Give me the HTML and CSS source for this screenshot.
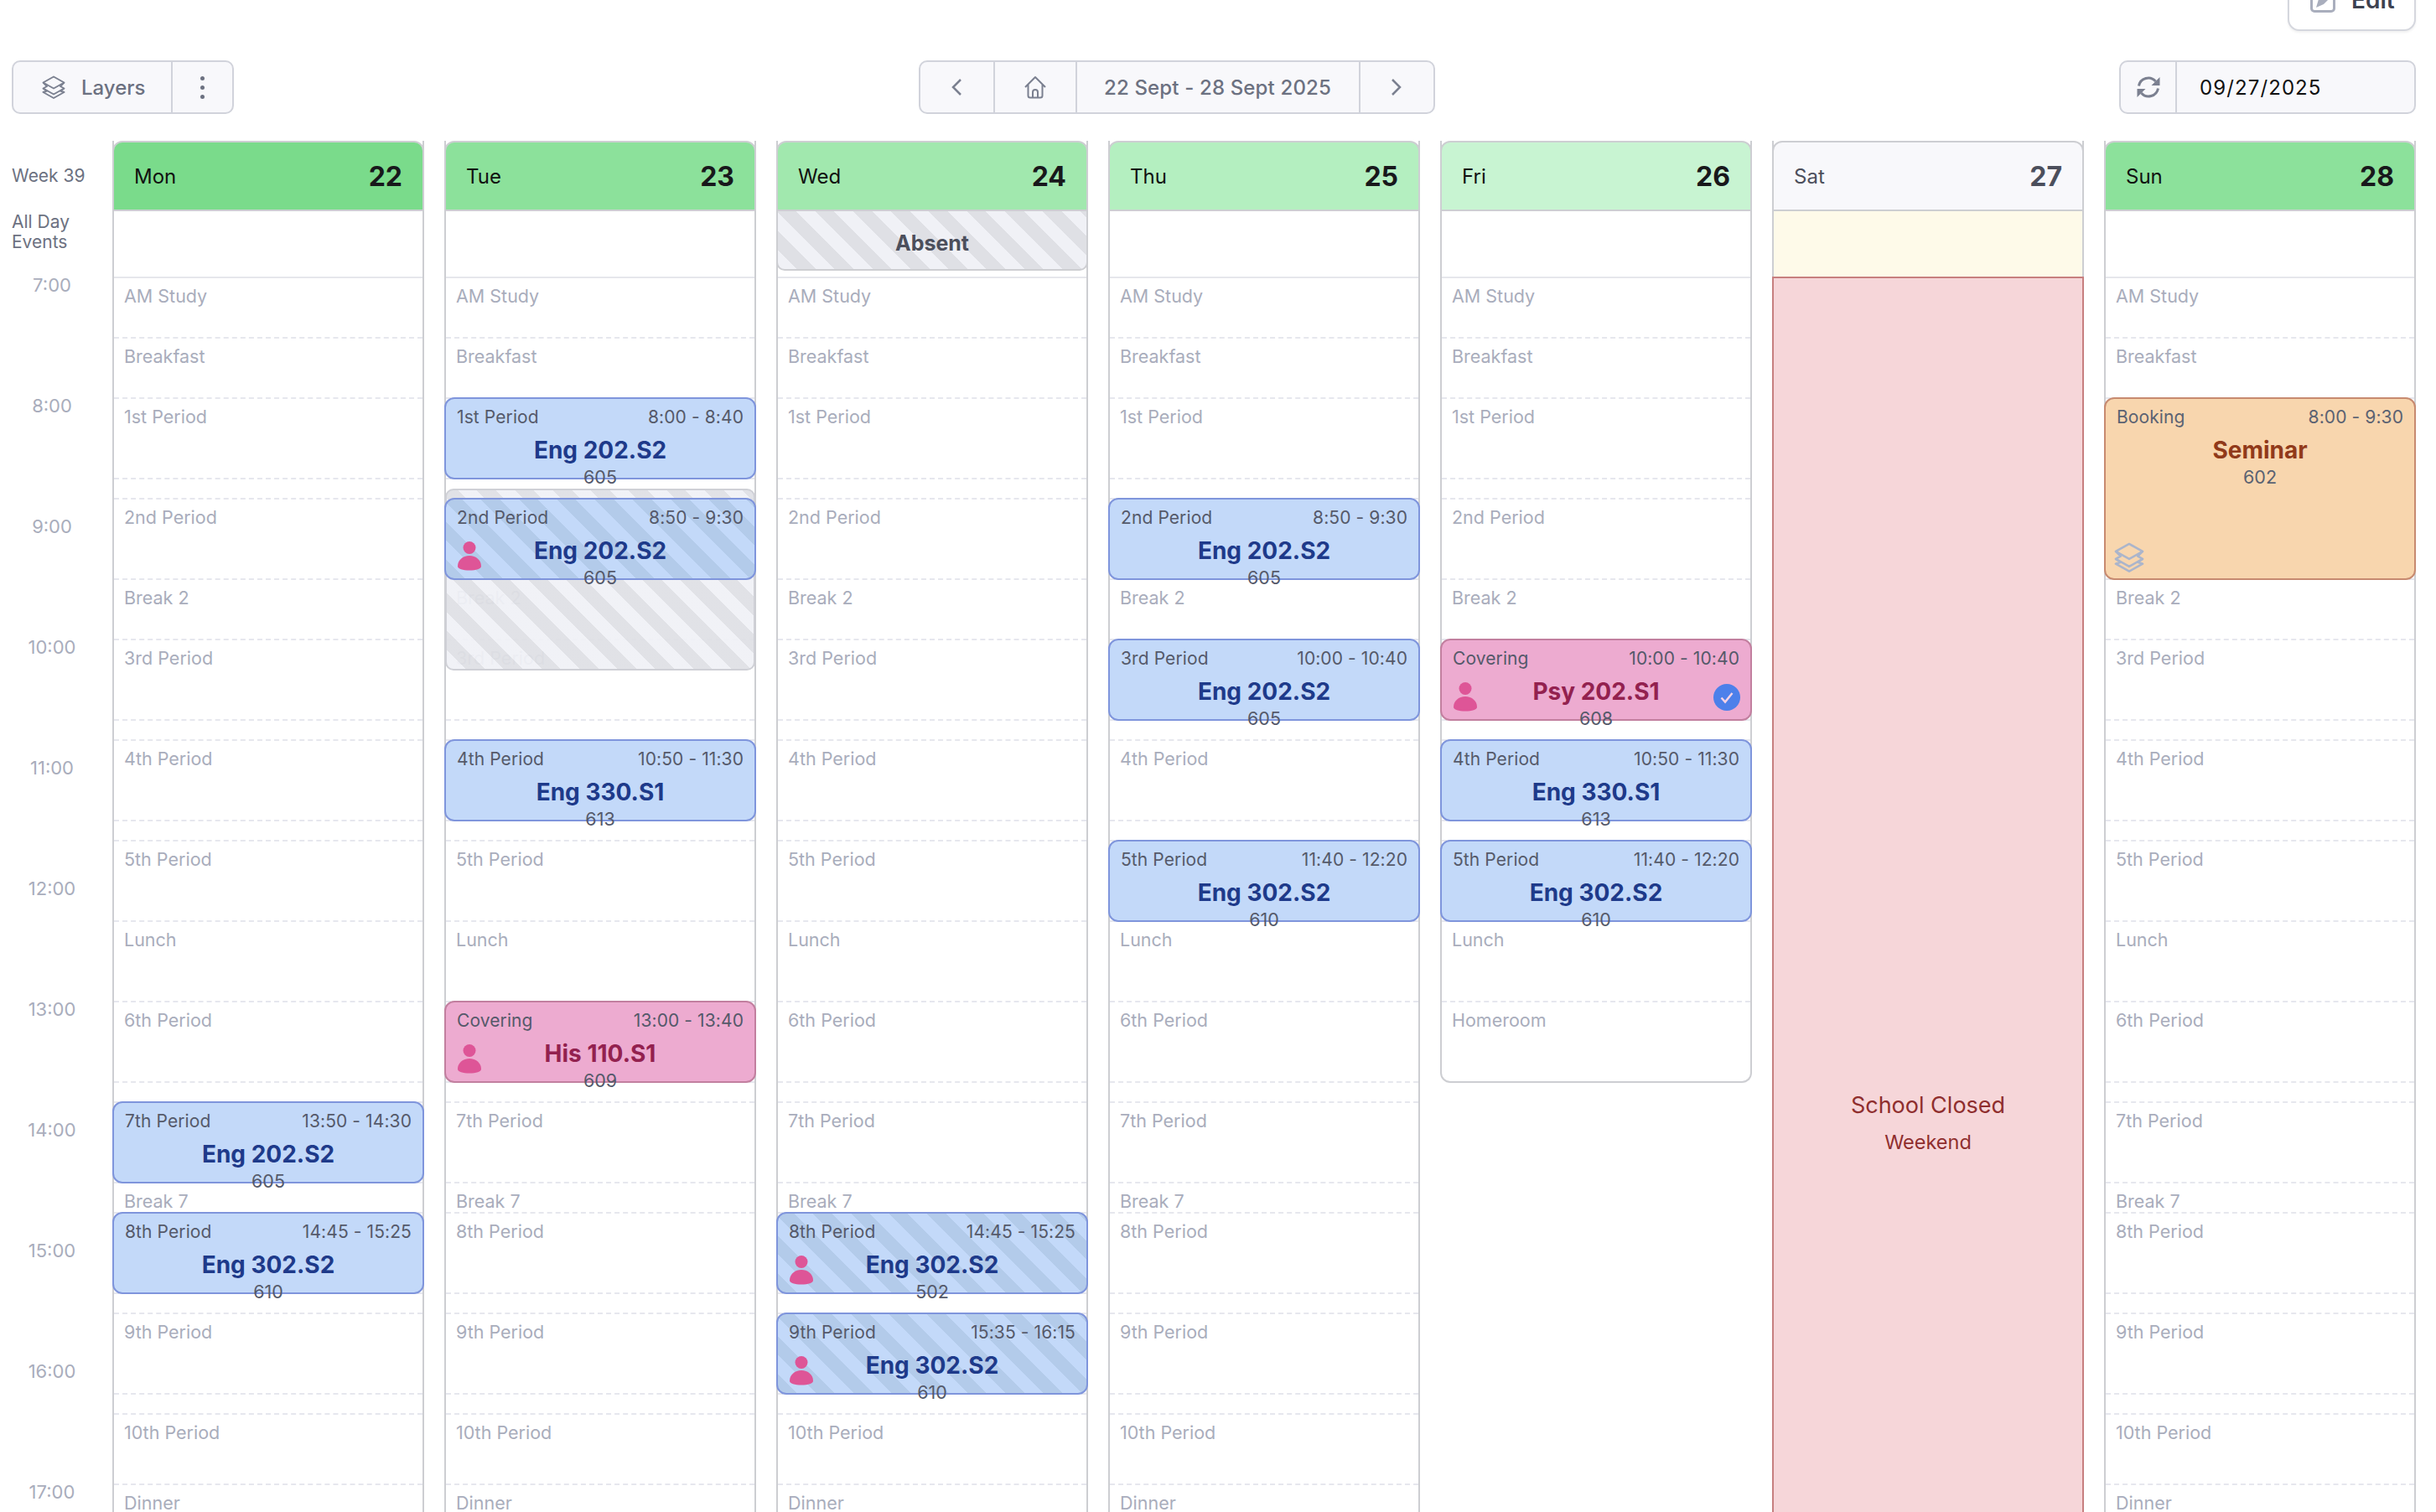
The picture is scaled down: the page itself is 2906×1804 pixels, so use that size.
FILE: index.html
```html
<!DOCTYPE html>
<html lang="en">
<head>
<meta charset="utf-8">
<title>Timetable</title>
<link rel="stylesheet" href="styles.css">
</head>
<body>
<svg class="defs" width="0" height="0" aria-hidden="true">
  <symbol id="person" viewBox="0 0 28 35"><circle cx="14" cy="7.5" r="7.5"/><path d="M0 29.5C0 22.5 6 17 14 17s14 5.500 14 12.500c0 3.500-6 5-14 5s-14-1.500-14-5z"/></symbol>
  <symbol id="layers" viewBox="0 0 28 28"><path d="M14 1.500 26.500 8.500 14 15.500 1.500 8.500z"/><path d="M1.500 8.500 6 13 1.500 15.500 14 22.500 26.500 15.500 22 13 26.500 8.500"/><path d="M1.500 15.500 6 18.500 1.500 20 14 27 26.500 20 22 18.500 26.500 15.500"/></symbol>
</svg>
<div class="page">
  <div class="topbar">
    <button class="edit-btn">
      <svg class="edit-icon" viewBox="0 0 30 30"><rect x="1.500" y="1.500" width="27" height="27" rx="3.500" fill="none" stroke="#a9aebd" stroke-width="3"/><path d="M7 24 10 14 22 2 28 8 16 20z" fill="#a9aebd"/></svg>
      <span>Edit</span>
    </button>
  </div>
  <div class="toolbar">
    <div class="group">
      <div class="cell layers-cell"><svg class="ic-layers"><use href="#layers"/></svg><span>Layers</span></div>
      <div class="cell dots-cell"><i></i><i></i><i></i></div>
    </div>
    <div class="group">
      <div class="cell nav-cell"><svg class="chev" viewBox="0 0 14 22"><path d="M12 2 3 11l9 9"/></svg></div>
      <div class="cell home-cell"><svg class="ic-home" viewBox="0 0 28 28"><path d="M2 14 14 2l12 12M5.500 11v13a2.500 2.500 0 0 0 2.500 2.500h12a2.500 2.500 0 0 0 2.500-2.500V11M11 26.500V20a3 3 0 0 1 6 0v6.500"/></svg></div>
      <div class="cell range-cell">22 Sept - 28 Sept 2025</div>
      <div class="cell nav-cell"><svg class="chev" viewBox="0 0 14 22"><path d="M2 2l9 9-9 9"/></svg></div>
    </div>
    <div class="group">
      <div class="cell refresh-cell"><svg class="ic-refresh" viewBox="0 0 28 26"><path class="arc" d="M2.500 11.500A11.500 11.500 0 0 1 22.500 6M25.500 14.500A11.500 11.500 0 0 1 5.500 20"/><path class="tip" d="M27.500 1v10h-10zM.5 25V15h10z"/></svg></div>
      <div class="cell date-cell">09/27/2025</div>
    </div>
  </div>

  <div class="calendar">
    <div class="gutter">
      <div class="week">Week 39</div>
      <div class="allday-label">All Day<br>Events</div>
      <div class="hour">7:00</div>
      <div class="hour">8:00</div>
      <div class="hour">9:00</div>
      <div class="hour">10:00</div>
      <div class="hour">11:00</div>
      <div class="hour">12:00</div>
      <div class="hour">13:00</div>
      <div class="hour">14:00</div>
      <div class="hour">15:00</div>
      <div class="hour">16:00</div>
      <div class="hour">17:00</div>
    </div>

    <!-- Monday -->
    <div class="day">
      <div class="day-head mon"><span>Mon</span><b>22</b></div>
      <div class="allday"></div>
      <div class="row h72 first">AM Study</div>
      <div class="row h72">Breakfast</div>
      <div class="row h96">1st Period</div>
      <div class="row h24"></div>
      <div class="row h96">2nd Period</div>
      <div class="row h72">Break 2</div>
      <div class="row h96">3rd Period</div>
      <div class="row h24"></div>
      <div class="row h96">4th Period</div>
      <div class="row h24"></div>
      <div class="row h96">5th Period</div>
      <div class="row h96">Lunch</div>
      <div class="row h96">6th Period</div>
      <div class="row h24"></div>
      <div class="row h96">7th Period
        <div class="event blue"><div class="ev-head"><span>7th Period</span><span>13:50 - 14:30</span></div><div class="ev-title">Eng 202.S2</div><div class="ev-room">605</div></div>
      </div>
      <div class="row h36">Break 7</div>
      <div class="row h96">8th Period
        <div class="event blue"><div class="ev-head"><span>8th Period</span><span>14:45 - 15:25</span></div><div class="ev-title">Eng 302.S2</div><div class="ev-room">610</div></div>
      </div>
      <div class="row h24"></div>
      <div class="row h96">9th Period</div>
      <div class="row h24"></div>
      <div class="row h84">10th Period</div>
      <div class="row h96">Dinner</div>
    </div>

    <!-- Tuesday -->
    <div class="day">
      <div class="day-head tue"><span>Tue</span><b>23</b></div>
      <div class="allday"></div>
      <div class="row h72 first">AM Study</div>
      <div class="row h72">Breakfast</div>
      <div class="row h96">1st Period
        <div class="event blue"><div class="ev-head"><span>1st Period</span><span>8:00 - 8:40</span></div><div class="ev-title">Eng 202.S2</div><div class="ev-room">605</div></div>
      </div>
      <div class="row h24"><div class="absence"></div></div>
      <div class="row h96">2nd Period
        <div class="event blue hatched"><div class="ev-head"><span>2nd Period</span><span>8:50 - 9:30</span></div><div class="ev-title">Eng 202.S2</div><div class="ev-room">605</div><svg class="person"><use href="#person"/></svg></div>
      </div>
      <div class="row h72">Break 2</div>
      <div class="row h96">3rd Period</div>
      <div class="row h24"></div>
      <div class="row h96">4th Period
        <div class="event blue"><div class="ev-head"><span>4th Period</span><span>10:50 - 11:30</span></div><div class="ev-title">Eng 330.S1</div><div class="ev-room">613</div></div>
      </div>
      <div class="row h24"></div>
      <div class="row h96">5th Period</div>
      <div class="row h96">Lunch</div>
      <div class="row h96">6th Period
        <div class="event pink"><div class="ev-head"><span>Covering</span><span>13:00 - 13:40</span></div><div class="ev-title">His 110.S1</div><div class="ev-room">609</div><svg class="person"><use href="#person"/></svg></div>
      </div>
      <div class="row h24"></div>
      <div class="row h96">7th Period</div>
      <div class="row h36">Break 7</div>
      <div class="row h96">8th Period</div>
      <div class="row h24"></div>
      <div class="row h96">9th Period</div>
      <div class="row h24"></div>
      <div class="row h84">10th Period</div>
      <div class="row h96">Dinner</div>
    </div>

    <!-- Wednesday -->
    <div class="day">
      <div class="day-head wed"><span>Wed</span><b>24</b></div>
      <div class="allday"><div class="absent-banner">Absent</div></div>
      <div class="row h72 first">AM Study</div>
      <div class="row h72">Breakfast</div>
      <div class="row h96">1st Period</div>
      <div class="row h24"></div>
      <div class="row h96">2nd Period</div>
      <div class="row h72">Break 2</div>
      <div class="row h96">3rd Period</div>
      <div class="row h24"></div>
      <div class="row h96">4th Period</div>
      <div class="row h24"></div>
      <div class="row h96">5th Period</div>
      <div class="row h96">Lunch</div>
      <div class="row h96">6th Period</div>
      <div class="row h24"></div>
      <div class="row h96">7th Period</div>
      <div class="row h36">Break 7</div>
      <div class="row h96">8th Period
        <div class="event blue hatched"><div class="ev-head"><span>8th Period</span><span>14:45 - 15:25</span></div><div class="ev-title">Eng 302.S2</div><div class="ev-room">502</div><svg class="person"><use href="#person"/></svg></div>
      </div>
      <div class="row h24"></div>
      <div class="row h96">9th Period
        <div class="event blue hatched"><div class="ev-head"><span>9th Period</span><span>15:35 - 16:15</span></div><div class="ev-title">Eng 302.S2</div><div class="ev-room">610</div><svg class="person"><use href="#person"/></svg></div>
      </div>
      <div class="row h24"></div>
      <div class="row h84">10th Period</div>
      <div class="row h96">Dinner</div>
    </div>

    <!-- Thursday -->
    <div class="day">
      <div class="day-head thu"><span>Thu</span><b>25</b></div>
      <div class="allday"></div>
      <div class="row h72 first">AM Study</div>
      <div class="row h72">Breakfast</div>
      <div class="row h96">1st Period</div>
      <div class="row h24"></div>
      <div class="row h96">2nd Period
        <div class="event blue"><div class="ev-head"><span>2nd Period</span><span>8:50 - 9:30</span></div><div class="ev-title">Eng 202.S2</div><div class="ev-room">605</div></div>
      </div>
      <div class="row h72">Break 2</div>
      <div class="row h96">3rd Period
        <div class="event blue"><div class="ev-head"><span>3rd Period</span><span>10:00 - 10:40</span></div><div class="ev-title">Eng 202.S2</div><div class="ev-room">605</div></div>
      </div>
      <div class="row h24"></div>
      <div class="row h96">4th Period</div>
      <div class="row h24"></div>
      <div class="row h96">5th Period
        <div class="event blue"><div class="ev-head"><span>5th Period</span><span>11:40 - 12:20</span></div><div class="ev-title">Eng 302.S2</div><div class="ev-room">610</div></div>
      </div>
      <div class="row h96">Lunch</div>
      <div class="row h96">6th Period</div>
      <div class="row h24"></div>
      <div class="row h96">7th Period</div>
      <div class="row h36">Break 7</div>
      <div class="row h96">8th Period</div>
      <div class="row h24"></div>
      <div class="row h96">9th Period</div>
      <div class="row h24"></div>
      <div class="row h84">10th Period</div>
      <div class="row h96">Dinner</div>
    </div>

    <!-- Friday -->
    <div class="day closed-bottom">
      <div class="day-head fri"><span>Fri</span><b>26</b></div>
      <div class="allday"></div>
      <div class="row h72 first">AM Study</div>
      <div class="row h72">Breakfast</div>
      <div class="row h96">1st Period</div>
      <div class="row h24"></div>
      <div class="row h96">2nd Period</div>
      <div class="row h72">Break 2</div>
      <div class="row h96">3rd Period
        <div class="event pink"><div class="ev-head"><span>Covering</span><span>10:00 - 10:40</span></div><div class="ev-title">Psy 202.S1</div><div class="ev-room">608</div><svg class="person"><use href="#person"/></svg>
          <svg class="check" viewBox="0 0 32 32"><circle cx="16" cy="16" r="16" fill="#4d80ea"/><path d="M9.500 16.500 14 21.500 22.500 11" fill="none" stroke="#f6d3e6" stroke-width="2.500"/></svg>
        </div>
      </div>
      <div class="row h24"></div>
      <div class="row h96">4th Period
        <div class="event blue"><div class="ev-head"><span>4th Period</span><span>10:50 - 11:30</span></div><div class="ev-title">Eng 330.S1</div><div class="ev-room">613</div></div>
      </div>
      <div class="row h24"></div>
      <div class="row h96">5th Period
        <div class="event blue"><div class="ev-head"><span>5th Period</span><span>11:40 - 12:20</span></div><div class="ev-title">Eng 302.S2</div><div class="ev-room">610</div></div>
      </div>
      <div class="row h96">Lunch</div>
      <div class="row h96">Homeroom</div>
    </div>

    <!-- Saturday -->
    <div class="day">
      <div class="day-head sat"><span>Sat</span><b>27</b></div>
      <div class="allday cream"></div>
      <div class="closed">
        <div class="closed-title">School Closed</div>
        <div class="closed-sub">Weekend</div>
      </div>
    </div>

    <!-- Sunday -->
    <div class="day">
      <div class="day-head tue"><span>Sun</span><b>28</b></div>
      <div class="allday"></div>
      <div class="row h72 first">AM Study</div>
      <div class="row h72">Breakfast</div>
      <div class="row h96">1st Period
        <div class="event orange tall"><div class="ev-head"><span>Booking</span><span>8:00 - 9:30</span></div><div class="ev-title">Seminar</div><div class="ev-room">602</div><svg class="booking-layers"><use href="#layers"/></svg></div>
      </div>
      <div class="row h24"></div>
      <div class="row h96">2nd Period</div>
      <div class="row h72">Break 2</div>
      <div class="row h96">3rd Period</div>
      <div class="row h24"></div>
      <div class="row h96">4th Period</div>
      <div class="row h24"></div>
      <div class="row h96">5th Period</div>
      <div class="row h96">Lunch</div>
      <div class="row h96">6th Period</div>
      <div class="row h24"></div>
      <div class="row h96">7th Period</div>
      <div class="row h36">Break 7</div>
      <div class="row h96">8th Period</div>
      <div class="row h24"></div>
      <div class="row h96">9th Period</div>
      <div class="row h24"></div>
      <div class="row h84">10th Period</div>
      <div class="row h96">Dinner</div>
    </div>
  </div>
</div>
</body>
</html>
```

FILE: styles.css
```css
* { box-sizing: border-box; }
html, body { margin: 0; height: 1804px; overflow: hidden; background: #fff; }
body { font-family: Inter, "Liberation Sans", sans-serif; color: #111; }
.defs { position: absolute; }

.page { display: flex; flex-direction: column; padding: 0 24px 0 14px; }

/* top edit button (runs off the top edge) */
.topbar { display: flex; justify-content: flex-end; margin-top: -27px; }
.edit-btn {
  display: flex; align-items: center; gap: 19px;
  width: 153px; height: 64px; padding: 0 25px 10px;
  font: 600 28px Inter, sans-serif; color: #3d4250;
  background: #fff; border: 2px solid #d5d7de; border-radius: 14px;
  box-shadow: 0 2px 3px rgba(0,0,0,.06);
}
.edit-icon { width: 30px; height: 30px; flex: none; }

/* toolbar */
.toolbar { display: flex; justify-content: space-between; margin-top: 35px; height: 64px; }
.group {
  display: flex; align-items: stretch;
  background: #f8f8fb; border: 2px solid #d1d3db; border-radius: 10px;
  font-size: 24px; font-weight: 500; color: #6c7181;
}
.cell { display: flex; align-items: center; justify-content: center; border-left: 2px solid #d1d3db; }
.cell:first-child { border-left: 0; }
.layers-cell { width: 188px; gap: 19px; justify-content: flex-start; padding-left: 34px; }
.ic-layers { width: 28px; height: 28px; fill: none; stroke: #7b8090; stroke-width: 2; stroke-linejoin: round; }
.dots-cell { width: 73px; flex-direction: column; gap: 6px; }
.dots-cell i { width: 5px; height: 5px; border-radius: 50%; background: #6c7181; }
.nav-cell { width: 87px; }
.nav-cell:last-child { width: 89px; }
.chev { width: 14px; height: 22px; fill: none; stroke: #7b8090; stroke-width: 2.5; }
.home-cell { width: 98px; }
.ic-home { width: 28px; height: 28px; fill: none; stroke: #7b8090; stroke-width: 2; stroke-linejoin: round; }
.range-cell { width: 338px; letter-spacing: .15px; }
.refresh-cell { width: 65px; }
.ic-refresh { width: 28px; height: 26px; }
.ic-refresh .arc { fill: none; stroke: #7b8090; stroke-width: 3; }
.ic-refresh .tip { fill: #7b8090; }
.date-cell { width: 285px; justify-content: flex-start; padding-left: 27px; color: #111; font-weight: 400; letter-spacing: 1.1px; }

/* calendar */
.calendar { display: grid; grid-template-columns: 96px repeat(7, 372px); column-gap: 24px; align-items: start; margin-top: 32px; }

.gutter { display: flex; flex-direction: column; font-size: 21px; line-height: 24px; color: #6c7181; }
.week { height: 84px; line-height: 84px; white-space: nowrap; }
.allday-label { height: 76px; padding-top: 1px; }
.hour { height: 144px; font-size: 22px; text-align: center; color: #a9adbc; }

.day { position: relative; border-left: 2px solid #cdced2; border-right: 2px solid #cdced2; }
.closed-bottom { border-bottom: 2px solid #cdced2; border-radius: 0 0 12px 12px; }

.day-head {
  display: flex; justify-content: space-between; align-items: center;
  height: 84px; margin: 0 -2px; padding: 0 24px;
  border: 2px solid #cdced2; border-radius: 12px 12px 0 0;
  font-size: 24px; color: #111;
}
.day-head b { font-size: 32px; font-weight: 700; color: #18181b; }
.mon { background: #7adb8b; }
.tue { background: #8ce19b; }
.wed { background: #a1e8ae; }
.thu { background: #b4efc0; }
.fri { background: #c8f4d2; }
.sat { background: #f8f8fb; color: #4c4f5c; }
.sat b { color: #4c4f5c; }

.allday { height: 78px; }
.cream { background: #fefae9; }

.absent-banner {
  height: 71px; margin: 0 -2px; padding-top: 6px;
  display: flex; align-items: center; justify-content: center;
  font-size: 25px; font-weight: 700; color: #4c4f5c;
  border: 2px solid #cdced2; border-top: 0; border-radius: 0 0 10px 10px;
  background: repeating-linear-gradient(45deg, #f0f1f6 0 16px, #dfe0e5 16px 32px);
}

.row {
  position: relative; padding: 7px 12px 0;
  font-size: 21.500px; line-height: 28px; color: #a9adbc;
  border-top: 2px dashed #e6e7ee;
}
.row.first { border-top: 2px solid #e6e7ec; }
.h24 { height: 24px; }
.h36 { height: 36px; }
.h72 { height: 72px; }
.h84 { height: 84px; }
.h96 { height: 96px; }

.absence {
  position: absolute; z-index: 1; top: 11px; left: -1px; right: -1px; height: 217px;
  border: 2px solid #cfd0d6; border-radius: 10px;
  background: repeating-linear-gradient(45deg, rgba(240,241,246,.94) 0 16px, rgba(223,224,229,.94) 16px 32px);
}

/* events */
.event {
  position: absolute; z-index: 2; top: -2px; left: -2px; right: -2px; height: 98px;
  padding: 8px 13px 0; border: 2px solid; border-radius: 12px;
  color: #55596a;
}
.tall { height: 218px; }
.ev-head { display: flex; justify-content: space-between; font-size: 21px; letter-spacing: .1px; line-height: 28px; }
.ev-title { margin-top: 7px; font-size: 28px; line-height: 36px; font-weight: 700; text-align: center; white-space: nowrap; }
.ev-room { margin-top: 1px; font-size: 21.500px; line-height: 26px; text-align: center; }

.blue { background-color: #c3d9f9; border-color: #7f95dc; }
.blue .ev-title { color: #1e3a8a; }
.hatched { background-image: repeating-linear-gradient(45deg, #b3cbea 0 16px, #c3d9f9 16px 32px); }
.pink { background: #edabd0; border-color: #c27f9f; }
.pink .ev-title { color: #93214f; }
.orange { background: #f8d6ae; border-color: #c78a70; color: #5b6272; }
.orange .ev-title { color: #913a1a; }

.person { position: absolute; left: 14px; top: 50px; width: 28px; height: 35px; fill: #de5597; }
.check { position: absolute; right: 12px; top: 52px; width: 32px; height: 32px; }
.booking-layers { position: absolute; left: 10px; top: 171px; width: 36px; height: 36px; fill: none; stroke: #abb5cb; stroke-width: 2; stroke-linejoin: round; }

/* closed day */
.closed {
  display: flex; flex-direction: column; align-items: center; justify-content: center;
  height: 2020px; margin: 0 -2px;
  background: #f6d6d9; border: 2px solid #c77f7f;
  color: #8f2e2e;
}
.closed-title { font-size: 27px; line-height: 36px; }
.closed-sub { margin-top: 10px; font-size: 23.500px; line-height: 32px; }
```
